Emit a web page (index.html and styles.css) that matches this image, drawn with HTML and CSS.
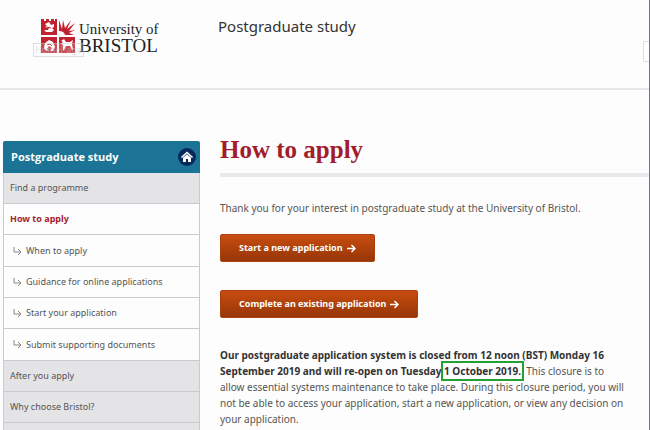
FILE: index.html
```
<!DOCTYPE html>
<html lang="en">
<head>
<meta charset="utf-8">
<meta name="viewport" content="width=device-width, initial-scale=1">
<title>How to apply</title>
<link rel="stylesheet" href="styles.css">
</head>
<body>
<header class="site-header">
  <a class="logo" href="#" aria-label="University of Bristol">
    <svg class="crest" viewBox="0 0 34 35" aria-hidden="true">
      <g fill="#c0222f">
        <path d="M0 0h3v2h2V0h3v2h2V0h3v2h1V0h2v16H0z"/>
        <path d="M0 18h16v16H0zM18 18h16v16H18z"/>
        <path d="M18 16V1l3 9 1-9 2 8 6-8-4 9 8-6-6 8 6-1-6 3 5 2z"/>
      </g>
      <path d="M18 16v-4q5 0 6 4z" fill="#fff"/>
      <g fill="#fff">
        <path d="M4 5l4-2 2 3 3-1v3l-2 1 2 2-2 2H5l-2-2 4 0 1-2-4-1 2-1z"/>
        <path d="M3 29l1-5 4-3 4 2 2 5-2 4H9l2-3-3-2-2 3 2 2-4-1z"/>
        <path d="M20 22l3-2 2 3 4 0 3-2-1 4 1 6h-1l-2-4-4 0-2 4h-1l0-5-2-1 2-2z"/>
      </g>
      <path d="M6 8l4 1M6 26l3-1 2 2" fill="none" stroke="#c0222f"/>
    </svg>
    <span class="wordmark"><span class="wordmark-top">University of</span><span class="wordmark-name">BRISTOL</span></span>
    <span class="home-label">HomePage</span>
  </a>
  <p class="section-title">Postgraduate study</p>
  <input class="search" type="search" aria-label="Search">
</header>
<div class="page">
  <nav class="side-nav" aria-label="Postgraduate study">
    <a class="nav-head" href="#">Postgraduate study
      <svg class="home" viewBox="0 0 18 18" aria-hidden="true"><circle cx="9" cy="9" r="9" fill="#07295a"/><path d="M3.500 9.500L9 4.500l5.500 5" fill="none" stroke="#fff" stroke-width="1.600"/><path d="M5 9.800l4-3.500 4 3.500V14h-3v-3H8v3H5z" fill="#fff"/></svg>
    </a>
    <ul class="nav-list">
      <li><a href="#">Find a programme</a></li>
      <li class="open"><a class="current" href="#">How to apply</a>
        <ul class="sub-list">
          <li><a href="#"><svg class="turn" viewBox="0 0 9 9" aria-hidden="true"><path d="M1 0v5h7M5 2l3 3-3 3"/></svg>When to apply</a></li>
          <li><a href="#"><svg class="turn" viewBox="0 0 9 9" aria-hidden="true"><path d="M1 0v5h7M5 2l3 3-3 3"/></svg>Guidance for online applications</a></li>
          <li><a href="#"><svg class="turn" viewBox="0 0 9 9" aria-hidden="true"><path d="M1 0v5h7M5 2l3 3-3 3"/></svg>Start your application</a></li>
          <li><a href="#"><svg class="turn" viewBox="0 0 9 9" aria-hidden="true"><path d="M1 0v5h7M5 2l3 3-3 3"/></svg>Submit supporting documents</a></li>
        </ul>
      </li>
      <li><a href="#">After you apply</a></li>
      <li><a href="#">Why choose Bristol?</a></li>
    </ul>
  </nav>
  <main class="content">
    <h1>How to apply</h1>
    <p class="intro">Thank you for your interest in postgraduate study at the University of Bristol.</p>
    <div class="actions">
      <a class="button" href="#">Start a new application <svg class="arrow" viewBox="0 0 9 9" aria-hidden="true"><path d="M0 4.500h8M4.500 1L8 4.500 4.500 8"/></svg></a>
      <a class="button" href="#">Complete an existing application <svg class="arrow" viewBox="0 0 9 9" aria-hidden="true"><path d="M0 4.500h8M4.500 1L8 4.500 4.500 8"/></svg></a>
    </div>
    <p class="notice"><strong>Our postgraduate application system is closed from 12 noon (BST) Monday 16 September 2019 and will re-open on Tuesday <span class="marked">1 October 2019.</span></strong>&nbsp; This closure is to allow essential systems maintenance to take place. During this closure period, you will not be able to access your application, start a new application, or view any decision on your application.</p>
  </main>
</div>
</body>
</html>
```
FILE: styles.css
```
* { box-sizing: border-box; }
html { height: 100%; }
body {
  display: flex;
  flex-direction: column;
  margin: 0;
  min-height: 100%;
  border-right: 1px solid #77777b;
  background: #fdfdfd;
  color: #555;
  font: 10px/16px "Noto Sans", "Open Sans", sans-serif;
}
a { color: inherit; text-decoration: none; }
ul { margin: 0; padding: 0; list-style: none; }

.site-header {
  display: flex;
  align-items: flex-start;
  height: 90px;
  padding-left: 41px;
  border-bottom: 2px solid #e6e6e8;
}
.logo {
  position: relative;
  display: flex;
  gap: 4px;
  width: 177px;
  padding-top: 19px;
  color: #222;
}
.crest { width: 34px; height: 35px; }
.wordmark {
  display: flex;
  flex-direction: column;
  padding-top: 2px;
  font-family: "Liberation Serif", serif;
  white-space: nowrap;
}
.wordmark-top { font-size: 15px; line-height: 16px; }
.wordmark-name { font-size: 19px; line-height: 18px; }
.home-label {
  position: absolute;
  left: -8px;
  top: 43px;
  width: 51px;
  height: 14px;
  border: 1px solid #ccc;
  background: rgba(255, 255, 255, .3);
  color: #ccc;
  font-size: 9px;
  line-height: 12px;
  text-align: center;
  opacity: .6;
}
.section-title {
  margin: 16px 0 0;
  color: #333;
  font-size: 15px;
  line-height: 20px;
}
.search {
  width: 6px;
  height: 21px;
  margin: 41px 0 0 auto;
  padding: 0;
  border: 1px solid #ddd;
  border-right: 0;
  border-radius: 2px 0 0 2px;
  background: #fff;
}

.page {
  display: grid;
  grid-template-columns: 197px 1fr;
  gap: 20px;
  flex: 1;
  padding-left: 3px;
}
.side-nav {
  display: flex;
  flex-direction: column;
  padding-top: 51px;
  font-size: 9px;
}
.nav-head {
  display: flex;
  align-items: center;
  justify-content: space-between;
  height: 32px;
  padding: 0 4px 0 8px;
  border-radius: 2px 2px 0 0;
  background: #1b7495;
  color: #fff;
  font: 700 11px/16px "Open Sans", "Noto Sans", sans-serif;
}
.home { width: 18px; height: 18px; }
.nav-list {
  flex: 1;
  border: 1px solid #cbcad0;
  border-width: 0 1px;
  background: #e4e3e5;
}
.nav-list a {
  display: flex;
  align-items: center;
  height: 31px;
  padding-left: 6px;
  border-bottom: 1px solid #cbcad0;
}
.open { background: #fdfdfd; }
.nav-list .current { color: #a3222f; font-weight: 700; }
.sub-list { padding-top: 1px; }
.sub-list li:last-child a { height: 32px; }
.sub-list a { gap: 4px; padding-left: 9px; }
.turn { width: 9px; height: 9px; fill: none; stroke: #888; }

h1 {
  margin: 42px 0 0;
  padding-bottom: 5px;
  border-bottom: 4px solid #e9e8eb;
  color: #a31c2b;
  font: 700 25px/36px "Liberation Serif", serif;
}
.intro { margin: 23px 0 18px; }
.actions {
  display: flex;
  flex-direction: column;
  align-items: flex-start;
  gap: 28px;
}
.button {
  display: flex;
  align-items: center;
  gap: 4px;
  height: 28px;
  padding: 0 18px;
  border: 1px solid #a8420f;
  border-radius: 2px;
  background: linear-gradient(#c84d10, #963607);
  color: #fff;
  font-size: 9px;
  font-weight: 700;
}
.arrow { width: 9px; height: 9px; fill: none; stroke: #fff; stroke-width: 1.500; }
.notice { margin: 29px 22px 0 0; }
.notice strong { color: #333; }
.marked { outline: 2px solid #24a034; outline-offset: 1px; white-space: nowrap; }
```
